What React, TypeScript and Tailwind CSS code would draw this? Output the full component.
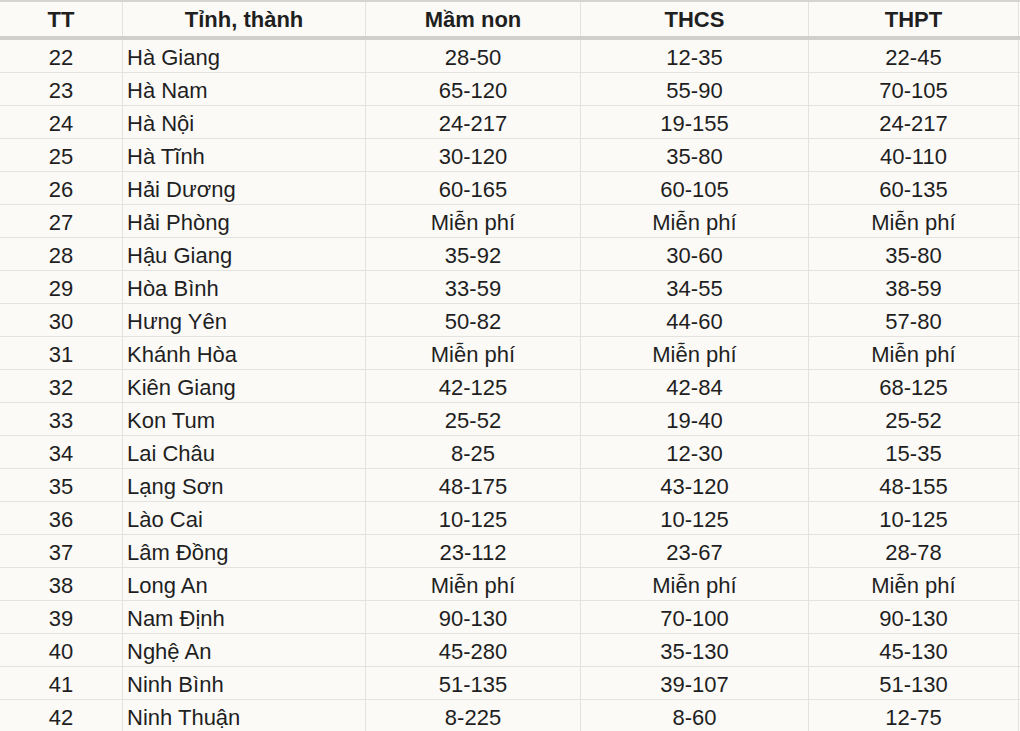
const rows: [string, string, string, string, string][] = [
  ["22", "Hà Giang", "28-50", "12-35", "22-45"],
  ["23", "Hà Nam", "65-120", "55-90", "70-105"],
  ["24", "Hà Nội", "24-217", "19-155", "24-217"],
  ["25", "Hà Tĩnh", "30-120", "35-80", "40-110"],
  ["26", "Hải Dương", "60-165", "60-105", "60-135"],
  ["27", "Hải Phòng", "Miễn phí", "Miễn phí", "Miễn phí"],
  ["28", "Hậu Giang", "35-92", "30-60", "35-80"],
  ["29", "Hòa Bình", "33-59", "34-55", "38-59"],
  ["30", "Hưng Yên", "50-82", "44-60", "57-80"],
  ["31", "Khánh Hòa", "Miễn phí", "Miễn phí", "Miễn phí"],
  ["32", "Kiên Giang", "42-125", "42-84", "68-125"],
  ["33", "Kon Tum", "25-52", "19-40", "25-52"],
  ["34", "Lai Châu", "8-25", "12-30", "15-35"],
  ["35", "Lạng Sơn", "48-175", "43-120", "48-155"],
  ["36", "Lào Cai", "10-125", "10-125", "10-125"],
  ["37", "Lâm Đồng", "23-112", "23-67", "28-78"],
  ["38", "Long An", "Miễn phí", "Miễn phí", "Miễn phí"],
  ["39", "Nam Định", "90-130", "70-100", "90-130"],
  ["40", "Nghệ An", "45-280", "35-130", "45-130"],
  ["41", "Ninh Bình", "51-135", "39-107", "51-130"],
  ["42", "Ninh Thuận", "8-225", "8-60", "12-75"],
];

const Cells = ({ cols }: { cols: string[] }) => (
  <>
    <div className="w-[123px] shrink-0 border-r border-[#e3e3e1] flex items-center justify-center pt-[3px]">{cols[0]}</div>
    <div className="w-[243px] shrink-0 border-r border-[#e3e3e1] flex items-center pl-[4px] pt-[3px]">{cols[1]}</div>
    <div className="w-[215px] shrink-0 border-r border-[#e3e3e1] flex items-center justify-center pt-[3px]">{cols[2]}</div>
    <div className="w-[228px] shrink-0 border-r border-[#e3e3e1] flex items-center justify-center pt-[3px]">{cols[3]}</div>
    <div className="w-[210px] shrink-0 border-r border-[#e3e3e1] flex items-center justify-center pt-[3px]">{cols[4]}</div>
  </>
);

export default function App() {
  return (
    <div
      className="w-[1020px] h-[731px] overflow-hidden bg-[#fbfaf7] text-[#1f1f1f] text-[22px] leading-none"
      style={{ fontFamily: '"Liberation Sans", Arial, sans-serif' }}
    >
      {/* Header */}
      <div className="flex h-[40px] border-t-2 border-t-[#d4d4d2] border-b-4 border-b-[#cfcfcd] font-bold">
        <div className="w-[123px] shrink-0 border-r border-[#e3e3e1] flex items-center justify-center pt-[2px]">TT</div>
        <div className="w-[243px] shrink-0 border-r border-[#e3e3e1] flex items-center justify-center pt-[2px]">Tỉnh, thành</div>
        <div className="w-[215px] shrink-0 border-r border-[#e3e3e1] flex items-center justify-center pt-[2px]">Mầm non</div>
        <div className="w-[228px] shrink-0 border-r border-[#e3e3e1] flex items-center justify-center pt-[2px]">THCS</div>
        <div className="w-[210px] shrink-0 border-r border-[#e3e3e1] flex items-center justify-center pt-[2px]">THPT</div>
      </div>

      {/* Body */}
      {rows.map((r) => (
        <div key={r[0]} className="flex h-[33px] border-b border-[#e3e3e1]">
          <Cells cols={r} />
        </div>
      ))}
    </div>
  );
}
